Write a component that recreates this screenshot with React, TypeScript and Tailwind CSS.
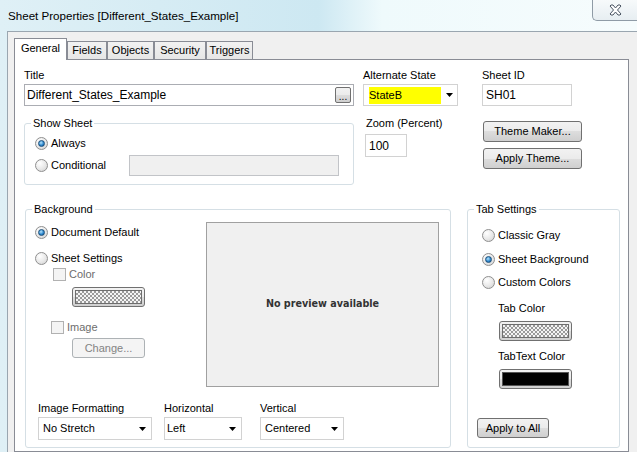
import React from "react";

function Radio({ checked = false }: { checked?: boolean }) {
  return (
    <span className="flex h-[13px] w-[13px] shrink-0 items-center justify-center rounded-full border border-[#8f8f8f] bg-[radial-gradient(circle_at_35%_30%,#ffffff,#e8e8e8_55%,#cdcdcd)]">
      {checked && (
        <span className="h-[7px] w-[7px] rounded-full border border-[#1c4f7a] bg-[radial-gradient(circle_at_40%_35%,#b8e4fb,#2f8ad0_55%,#0f4c86)]" />
      )}
    </span>
  );
}

function RadioRow({ label, checked }: { label: string; checked?: boolean }) {
  return (
    <div className="flex h-[14px] items-center gap-[3px]">
      <Radio checked={checked} />
      <span>{label}</span>
    </div>
  );
}

function Arrow() {
  return (
    <svg width="7" height="4" viewBox="0 0 7 4" className="shrink-0">
      <path d="M0 0h7L3.5 4z" fill="#000" />
    </svg>
  );
}

function Label({ children, className = "" }: { children: React.ReactNode; className?: string }) {
  return <div className={`h-[14px] leading-[14px] ${className}`}>{children}</div>;
}

function Swatch({ black = false }: { black?: boolean }) {
  return (
    <div className="flex h-[20px] w-[73px] items-center justify-center rounded-[3px] border border-[#707070] bg-[linear-gradient(#f2f2f2,#ebebeb_50%,#dddddd_50%,#cfcfcf)]">
      {black ? (
        <div className="h-[14px] w-[67px] border border-[#555] bg-black" />
      ) : (
        <div className="h-[14px] w-[67px] border border-[#6e6e6e] bg-[repeating-conic-gradient(#9a9a9a_0%_25%,#f4f4f4_0%_50%)] bg-[length:4px_4px]" />
      )}
    </div>
  );
}

export default function App() {
  return (
    <div className="flex h-[452px] w-[637px] flex-col overflow-hidden bg-[linear-gradient(90deg,#dff0f6,#cde8f2_50%,#effafc_60%,#f6fcfd)] font-['Liberation_Sans',Arial,sans-serif] text-[11px] text-black">
      {/* title bar */}
      <div className="flex h-[31px] shrink-0">
        <div className="pl-[8px] pt-[9px] text-[11.6px] leading-[14px]">Sheet Properties [Different_States_Example]</div>
        <div className="ml-auto flex h-[21px] w-[45px] items-center justify-center rounded-bl-[5px] border-b border-l border-[#8f9ba6] bg-[linear-gradient(#f7fafb,#e7eef2)]">
          <svg width="13" height="12" viewBox="-1 -1 13 12">
            <path
              d="M0 1L1 0H3L5.5 3L8 0H10L11 1L7.5 5L11 9L10 10H8L5.5 7L3 10H1L0 9L3.5 5Z"
              fill="#fff"
              stroke="#4b5563"
              strokeWidth="1"
              strokeLinejoin="round"
            />
          </svg>
        </div>
      </div>

      {/* client area */}
      <div className="ml-[7px] flex flex-1 flex-col border-l border-t border-[#9aa6b0] bg-[#f0f0f0] pl-[6px] pr-[8px] pt-[6px]">
        {/* tabs */}
        <div className="flex h-[21px] items-end">
          <div className="relative z-10 -mb-px flex h-[22px] w-[53px] items-center justify-center border border-b-0 border-[#898c95] bg-white pb-[2px]">
            General
          </div>
          <div className="flex h-[18px] w-[40px] items-center justify-center border border-b-0 border-[#898c95] bg-[linear-gradient(#f2f2f2,#e6e6e6)]">
            Fields
          </div>
          <div className="flex h-[18px] w-[47px] items-center justify-center border border-b-0 border-[#898c95] bg-[linear-gradient(#f2f2f2,#e6e6e6)]">
            Objects
          </div>
          <div className="flex h-[18px] w-[52px] items-center justify-center border border-b-0 border-[#898c95] bg-[linear-gradient(#f2f2f2,#e6e6e6)]">
            Security
          </div>
          <div className="flex h-[18px] w-[47px] items-center justify-center border border-b-0 border-[#898c95] bg-[linear-gradient(#f2f2f2,#e6e6e6)]">
            Triggers
          </div>
        </div>

        {/* panel */}
        <div className="flex-1 border border-[#898c95] bg-white pl-[9px] pt-[8px]">
          {/* top row */}
          <div className="flex">
            <div className="w-[330px]">
              <Label>Title</Label>
              <div className="mt-[2px] flex h-[22px] items-center border border-[#abadb3] pl-[2px] pr-[2px] text-[12px]">
                <span>Different_States_Example</span>
                <div className="ml-auto flex h-[16px] w-[16px] items-end justify-center rounded-[2px] border border-[#707070] bg-[linear-gradient(#f2f2f2,#ebebeb_50%,#dddddd_50%,#cfcfcf)] text-[10px] leading-[10px]">
                  ...
                </div>
              </div>
              <fieldset className="mt-[10px] h-[69px] rounded-[3px] border border-[#d5dfe5]">
                <legend className="ml-[6px] px-[2px] leading-[14px]">Show Sheet</legend>
                <div className="pl-[10px] pt-[6px]">
                  <RadioRow label="Always" checked />
                  <div className="mt-[5px] flex items-center">
                    <div className="w-[94px]">
                      <RadioRow label="Conditional" />
                    </div>
                    <div className="h-[21px] w-[210px] border border-[#c2c4c8] bg-[#f0f0f0]" />
                  </div>
                </div>
              </fieldset>
            </div>

            <div className="ml-[9px] w-[95px]">
              <Label>Alternate State</Label>
              <div className="mt-[2px] flex h-[22px] items-center border border-[#d2d2d2] pl-[5px] pr-[4px]">
                <div className="flex h-[17px] w-[72px] items-center bg-[#ffff00]">StateB</div>
                <div className="ml-auto">
                  <Arrow />
                </div>
              </div>
              <Label className="ml-[3px] mt-[10px]">Zoom (Percent)</Label>
              <div className="ml-[2px] mt-[4px] flex h-[23px] w-[42px] items-center border border-[#d2d2d2] pl-[3px] text-[12px]">
                100
              </div>
            </div>

            <div className="ml-[24px] w-[100px]">
              <Label>Sheet ID</Label>
              <div className="mt-[2px] flex h-[22px] w-[90px] items-center border border-[#d2d2d2] pl-[3px] text-[12px]">SH01</div>
              <div className="ml-px mt-[15px] flex h-[21px] w-[99px] items-center justify-center rounded-[3px] border border-[#707070] bg-[linear-gradient(#f2f2f2,#ebebeb_50%,#dddddd_50%,#cfcfcf)]">
                Theme Maker...
              </div>
              <div className="ml-px mt-[6px] flex h-[21px] w-[99px] items-center justify-center rounded-[3px] border border-[#707070] bg-[linear-gradient(#f2f2f2,#ebebeb_50%,#dddddd_50%,#cfcfcf)]">
                Apply Theme...
              </div>
            </div>
          </div>

          {/* bottom row */}
          <div className="mt-[17px] flex">
            <fieldset className="ml-px h-[246px] w-[426px] rounded-[3px] border border-[#d5dfe5]">
              <legend className="ml-[6px] px-[2px] leading-[14px]">Background</legend>
              <div className="flex">
                <div className="w-[180px] pl-[9px]">
                  <div className="mt-[9px]">
                    <RadioRow label="Document Default" checked />
                  </div>
                  <div className="mt-[12px]">
                    <RadioRow label="Sheet Settings" />
                  </div>
                  <div className="ml-[18px] mt-[2px] flex h-[14px] items-center gap-[3px] text-[#6d6d6d]">
                    <span className="h-[13px] w-[13px] border border-[#b1b1b1] bg-[#f4f4f4]" />
                    <span>Color</span>
                  </div>
                  <div className="ml-[37px] mt-[6px]">
                    <Swatch />
                  </div>
                  <div className="ml-[16px] mt-[13px] flex h-[14px] items-center gap-[3px] text-[#6d6d6d]">
                    <span className="h-[13px] w-[13px] border border-[#b1b1b1] bg-[#f4f4f4]" />
                    <span>Image</span>
                  </div>
                  <div className="ml-[37px] mt-[4px] flex h-[20px] w-[73px] items-center justify-center rounded-[3px] border border-[#adb2b5] bg-[#f4f4f4] text-[#838383]">
                    Change...
                  </div>
                </div>
                <div className="mt-[6px] flex h-[165px] w-[233px] items-center justify-center border border-[#a0a0a0] bg-[#f0f0f0] font-['DejaVu_Sans',Verdana,sans-serif] text-[9.6px] font-bold text-[#333]">
                  No preview available
                </div>
              </div>
              <div className="mt-[14px] flex pl-[12px]">
                <div>
                  <Label>Image Formatting</Label>
                  <div className="mt-[2px] flex h-[23px] w-[114px] items-center justify-between border border-[#d2d2d2] pl-[4px] pr-[5px]">
                    <span>No Stretch</span>
                    <Arrow />
                  </div>
                </div>
                <div className="ml-[12px]">
                  <Label>Horizontal</Label>
                  <div className="mt-[2px] flex h-[23px] w-[78px] items-center justify-between border border-[#d2d2d2] pl-[2px] pr-[5px]">
                    <span>Left</span>
                    <Arrow />
                  </div>
                </div>
                <div className="ml-[18px]">
                  <Label>Vertical</Label>
                  <div className="mt-[2px] flex h-[23px] w-[84px] items-center justify-between border border-[#d2d2d2] pl-[4px] pr-[5px]">
                    <span>Centered</span>
                    <Arrow />
                  </div>
                </div>
              </div>
            </fieldset>

            <fieldset className="ml-[16px] h-[246px] w-[153px] rounded-[3px] border border-[#d5dfe5]">
              <legend className="ml-[6px] px-[2px] leading-[14px]">Tab Settings</legend>
              <div className="pl-[9px]">
                <div className="mt-[12px] pl-[5px]">
                  <RadioRow label="Classic Gray" />
                </div>
                <div className="mt-[10px] pl-[5px]">
                  <RadioRow label="Sheet Background" checked />
                </div>
                <div className="mt-[9px] pl-[5px]">
                  <RadioRow label="Custom Colors" />
                </div>
                <Label className="mt-[12px] pl-[21px]">Tab Color</Label>
                <div className="mt-[6px] pl-[22px]">
                  <Swatch />
                </div>
                <Label className="mt-[8px] pl-[21px]">TabText Color</Label>
                <div className="mt-[6px] pl-[22px]">
                  <Swatch black />
                </div>
                <div className="mt-[29px] flex h-[20px] w-[72px] items-center justify-center rounded-[3px] border border-[#707070] bg-[linear-gradient(#f2f2f2,#ebebeb_50%,#dddddd_50%,#cfcfcf)]">
                  Apply to All
                </div>
              </div>
            </fieldset>
          </div>
        </div>
      </div>
    </div>
  );
}
